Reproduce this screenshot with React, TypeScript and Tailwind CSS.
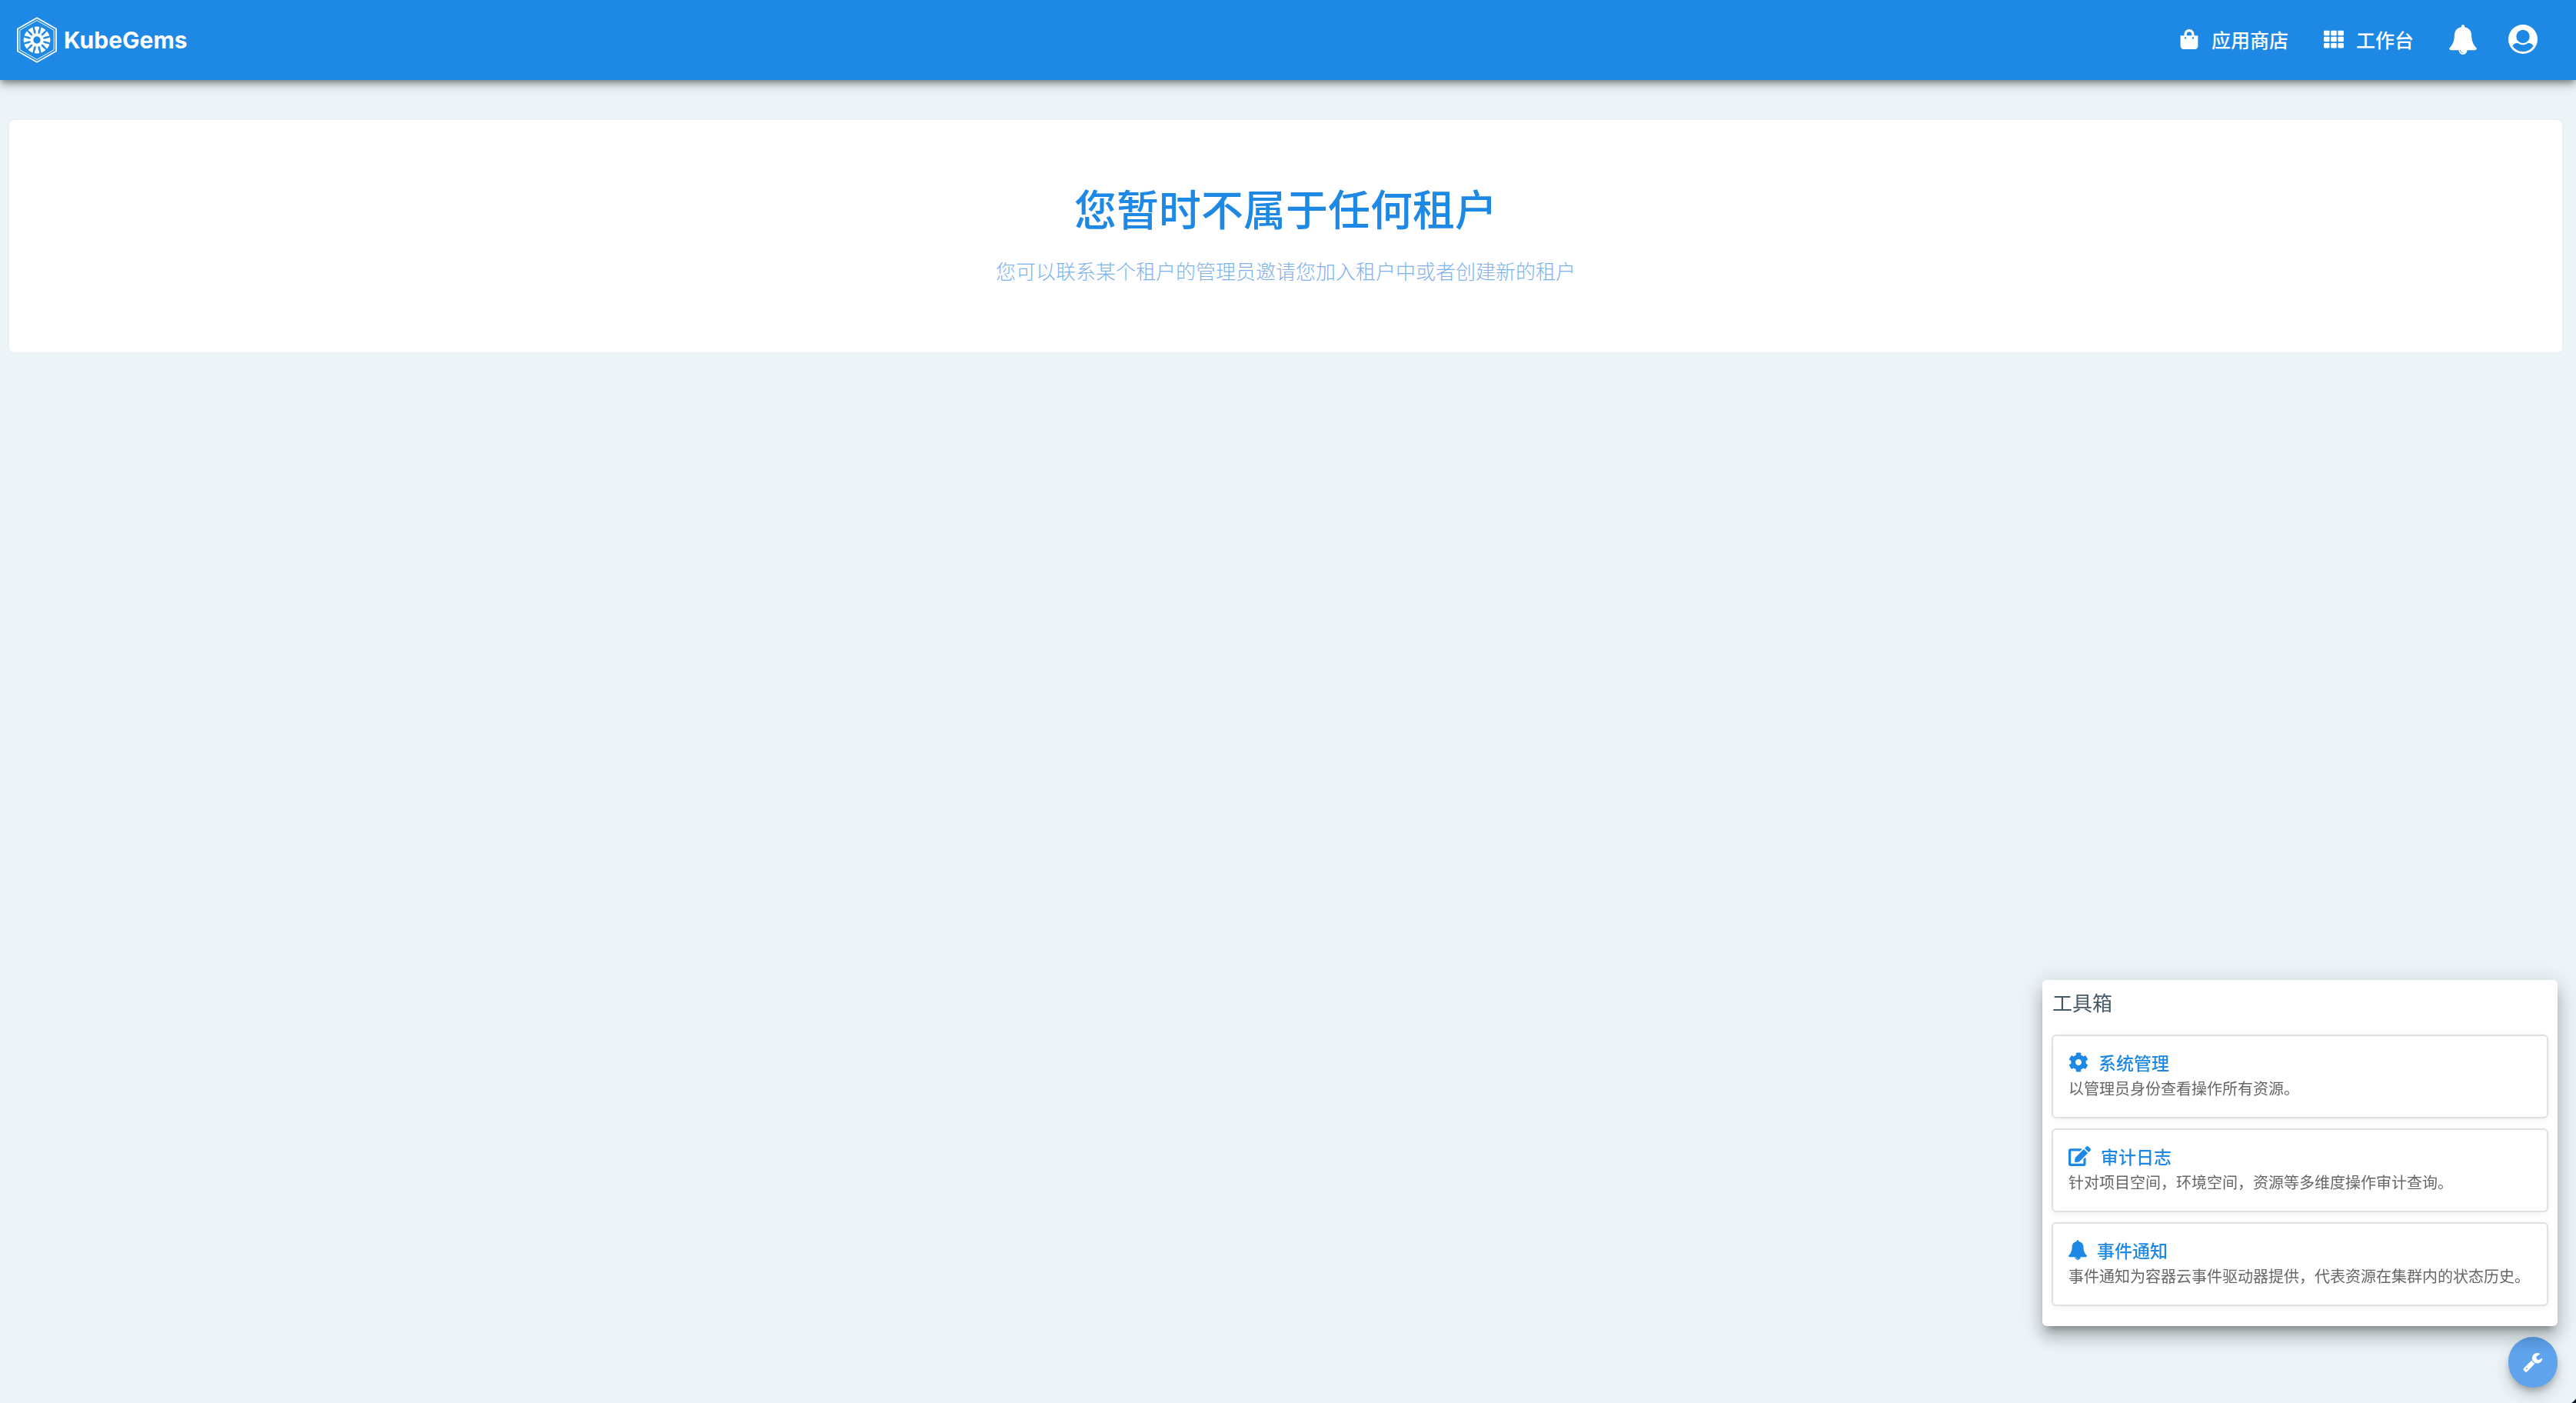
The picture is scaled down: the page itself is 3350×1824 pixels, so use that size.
import React from "react";
import { FaCog, FaEdit, FaShoppingBag, FaTh } from "react-icons/fa";

type IconProps = { className?: string };

function BellIcon({ className }: IconProps) {
  return (
    <svg viewBox="64 0 1664 1792" fill="currentColor" className={className} aria-hidden="true">
      <path d="M912 1696q0-16-16-16-59 0-101.5-42.5t-42.5-101.5q0-16-16-16t-16 16q0 73 51.5 124.5t124.5 51.5q16 0 16-16zm816-288q0 52-38 90t-90 38h-448q0 106-75 181t-181 75-181-75-75-181h-448q-52 0-90-38t-38-90q50-42 91-88t85-119.5 74.5-158.5 50-206 19.5-260q0-152 117-282.5t307-158.5q-8-19-8-39 0-40 28-68t68-28 68 28 28 68q0 20-8 39 190 28 307 158.5t117 282.5q0 139 19.5 260t50 206 74.5 158.5 85 119.5 91 88z" />
    </svg>
  );
}

function WrenchIcon({ className }: IconProps) {
  return (
    <svg viewBox="64 64 1700 1728" fill="currentColor" className={className} aria-hidden="true">
      <path d="M448 1472q0-26-19-45t-45-19-45 19-19 45 19 45 45 19 45-19 19-45zm644-420l-682 682q-37 37-90 37-52 0-91-37l-106-108q-38-36-38-90 0-53 38-91l681-681q39 98 114.5 173.5t173.5 114.5zm634-435q0 39-23 106-47 134-164.5 217.5t-258.5 83.5q-185 0-316.5-131.5t-131.5-316.5 131.5-316.5 316.5-131.5q58 0 121.5 16.5t107.5 46.5q16 11 16 28t-16 28l-293 169v224l193 107q5-3 79-48.5t135.5-81 70.5-35.5q15 0 23.5 10t8.5 25z" />
    </svg>
  );
}

function AccountIcon({ className }: IconProps) {
  return (
    <svg viewBox="0 0 112 112" fill="currentColor" className={className} aria-hidden="true">
      <path
        fillRule="evenodd"
        d="M56 0a56 56 0 1 1 0 112a56 56 0 1 1 0-112zM56 20a25.500 25.500 0 1 0 0 51a25.500 25.500 0 1 0 0-51zM16 82C20 74 28 70 36 71Q56 85 76 71C84 70 92 74 96 82A48 48 0 0 1 16 82z"
      />
    </svg>
  );
}

const spokes = [0, 30, 60, 90, 120, 150, 180, 210, 240, 270, 300, 330];

function LogoMark({ className }: IconProps) {
  return (
    <svg viewBox="0 0 52 60" className={className} aria-hidden="true">
      <path d="M26 1.200 51 15.500V44.500L26 58.800 1 44.500V15.500z" fill="none" stroke="white" strokeWidth="1.800" />
      <path d="M26 4.600 48.200 17.200V42.800L26 55.400 3.800 42.800V17.200z" fill="none" stroke="white" strokeWidth="1" />
      <circle cx="26" cy="30" r="6.500" fill="none" stroke="white" strokeWidth="3.600" />
      {spokes.map((angle) => (
        <path
          key={angle}
          d="M22.500 13Q26 12.200 29.500 13L27.500 19V21L28.500 24.500H23.500L24.500 21V19z"
          fill="white"
          transform={`rotate(${angle} 26 30)`}
        />
      ))}
    </svg>
  );
}

const tools = [
  { Icon: FaCog, size: "h-[26px] w-[26px]", title: "系统管理", text: "以管理员身份查看操作所有资源。" },
  { Icon: FaEdit, size: "h-[26px] w-[29px]", title: "审计日志", text: "针对项目空间，环境空间，资源等多维度操作审计查询。" },
  { Icon: BellIcon, size: "h-[26px] w-[24px]", title: "事件通知", text: "事件通知为容器云事件驱动器提供，代表资源在集群内的状态历史。" },
];

export default function App() {
  return (
    <div className="min-h-screen bg-[#ecf4f8] font-['Noto_Sans_CJK_SC',sans-serif]">
      <header className="flex h-[104px] items-center justify-between bg-[#1e88e5] pr-[50px] pl-[22px] text-white shadow-[0_4px_8px_-2px_rgba(0,0,0,0.4),0_8px_10px_0_rgba(0,0,0,0.14),0_2px_20px_0_rgba(0,0,0,0.12)]">
        <a href="#" className="flex items-center gap-[9px]">
          <LogoMark className="h-[60px] w-[52px]" />
          <span className="font-['Inter',sans-serif] text-[30px] leading-[36px] font-bold">KubeGems</span>
        </a>
        <nav className="flex items-center pb-[2px]">
          <a href="#" className="mr-[46px] flex items-center gap-4">
            <FaShoppingBag className="h-[26px] w-[26px]" />
            <span className="text-[25px] leading-[36px] font-medium">应用商店</span>
          </a>
          <a href="#" className="mr-[46px] flex items-center gap-4">
            <FaTh className="h-[26px] w-[26px]" />
            <span className="text-[25px] leading-[36px] font-medium">工作台</span>
          </a>
          <button type="button" aria-label="通知" className="mr-[41px]">
            <BellIcon className="h-[39px] w-[36px]" />
          </button>
          <button type="button" aria-label="账户">
            <AccountIcon className="h-[38px] w-[38px]" />
          </button>
        </nav>
      </header>

      <main className="pt-[52px] pr-[18px] pl-[12px]">
        <section className="rounded-[6px] bg-white pt-[73px] pb-[86px] text-center shadow-[0_0_4px_rgba(30,80,160,0.06)]">
          <h1 className="text-[55px] leading-[80px] font-medium text-[#1e88e5]">您暂时不属于任何租户</h1>
          <p className="mt-[23px] text-[26px] leading-[40px] font-light text-[#7fb2ec]">
            您可以联系某个租户的管理员邀请您加入租户中或者创建新的租户
          </p>
        </section>
      </main>

      <aside className="fixed right-[24px] bottom-[100px] z-10 w-[670px] rounded-[6px] bg-white px-[12px] pt-[10px] pb-[26px] shadow-[0_10px_10px_-6px_rgba(0,0,0,0.3),0_16px_20px_2px_rgba(0,0,0,0.14),0_6px_28px_4px_rgba(0,0,0,0.14)]">
        <h2 className="mb-[24px] pl-[1px] text-[26px] leading-[37px] text-[#455a64]">工具箱</h2>
        <div className="flex flex-col gap-[13px]">
          {tools.map(({ Icon, size, title, text }) => (
            <a
              key={title}
              href="#"
              className="block h-[109px] rounded-[6px] border-2 border-[#e0e0e0] px-[20px] pt-[17px] shadow-[0_2px_8px_rgba(0,0,0,0.06)]"
            >
              <span className="flex items-center gap-[13px] text-[#1e88e5]">
                <Icon className={size} />
                <span className="text-[23px] leading-[34px] font-medium">{title}</span>
              </span>
              <span className="block text-[20px] leading-[34px] whitespace-nowrap text-[#666]">{text}</span>
            </a>
          ))}
        </div>
      </aside>

      <button
        type="button"
        aria-label="工具箱"
        className="fixed right-[24px] bottom-[20px] flex h-[66px] w-[64px] items-center justify-center rounded-full bg-[#5ea3ec] text-white shadow-[0_6px_10px_-2px_rgba(0,0,0,0.25),0_10px_20px_0_rgba(0,0,0,0.16)]"
      >
        <WrenchIcon className="h-[26px] w-[26px]" />
      </button>
      <div className="fixed right-0 bottom-0 h-[20px] w-[20px] bg-[radial-gradient(circle_at_0_0,transparent_24px,#0b1622_25px)]" />
    </div>
  );
}
